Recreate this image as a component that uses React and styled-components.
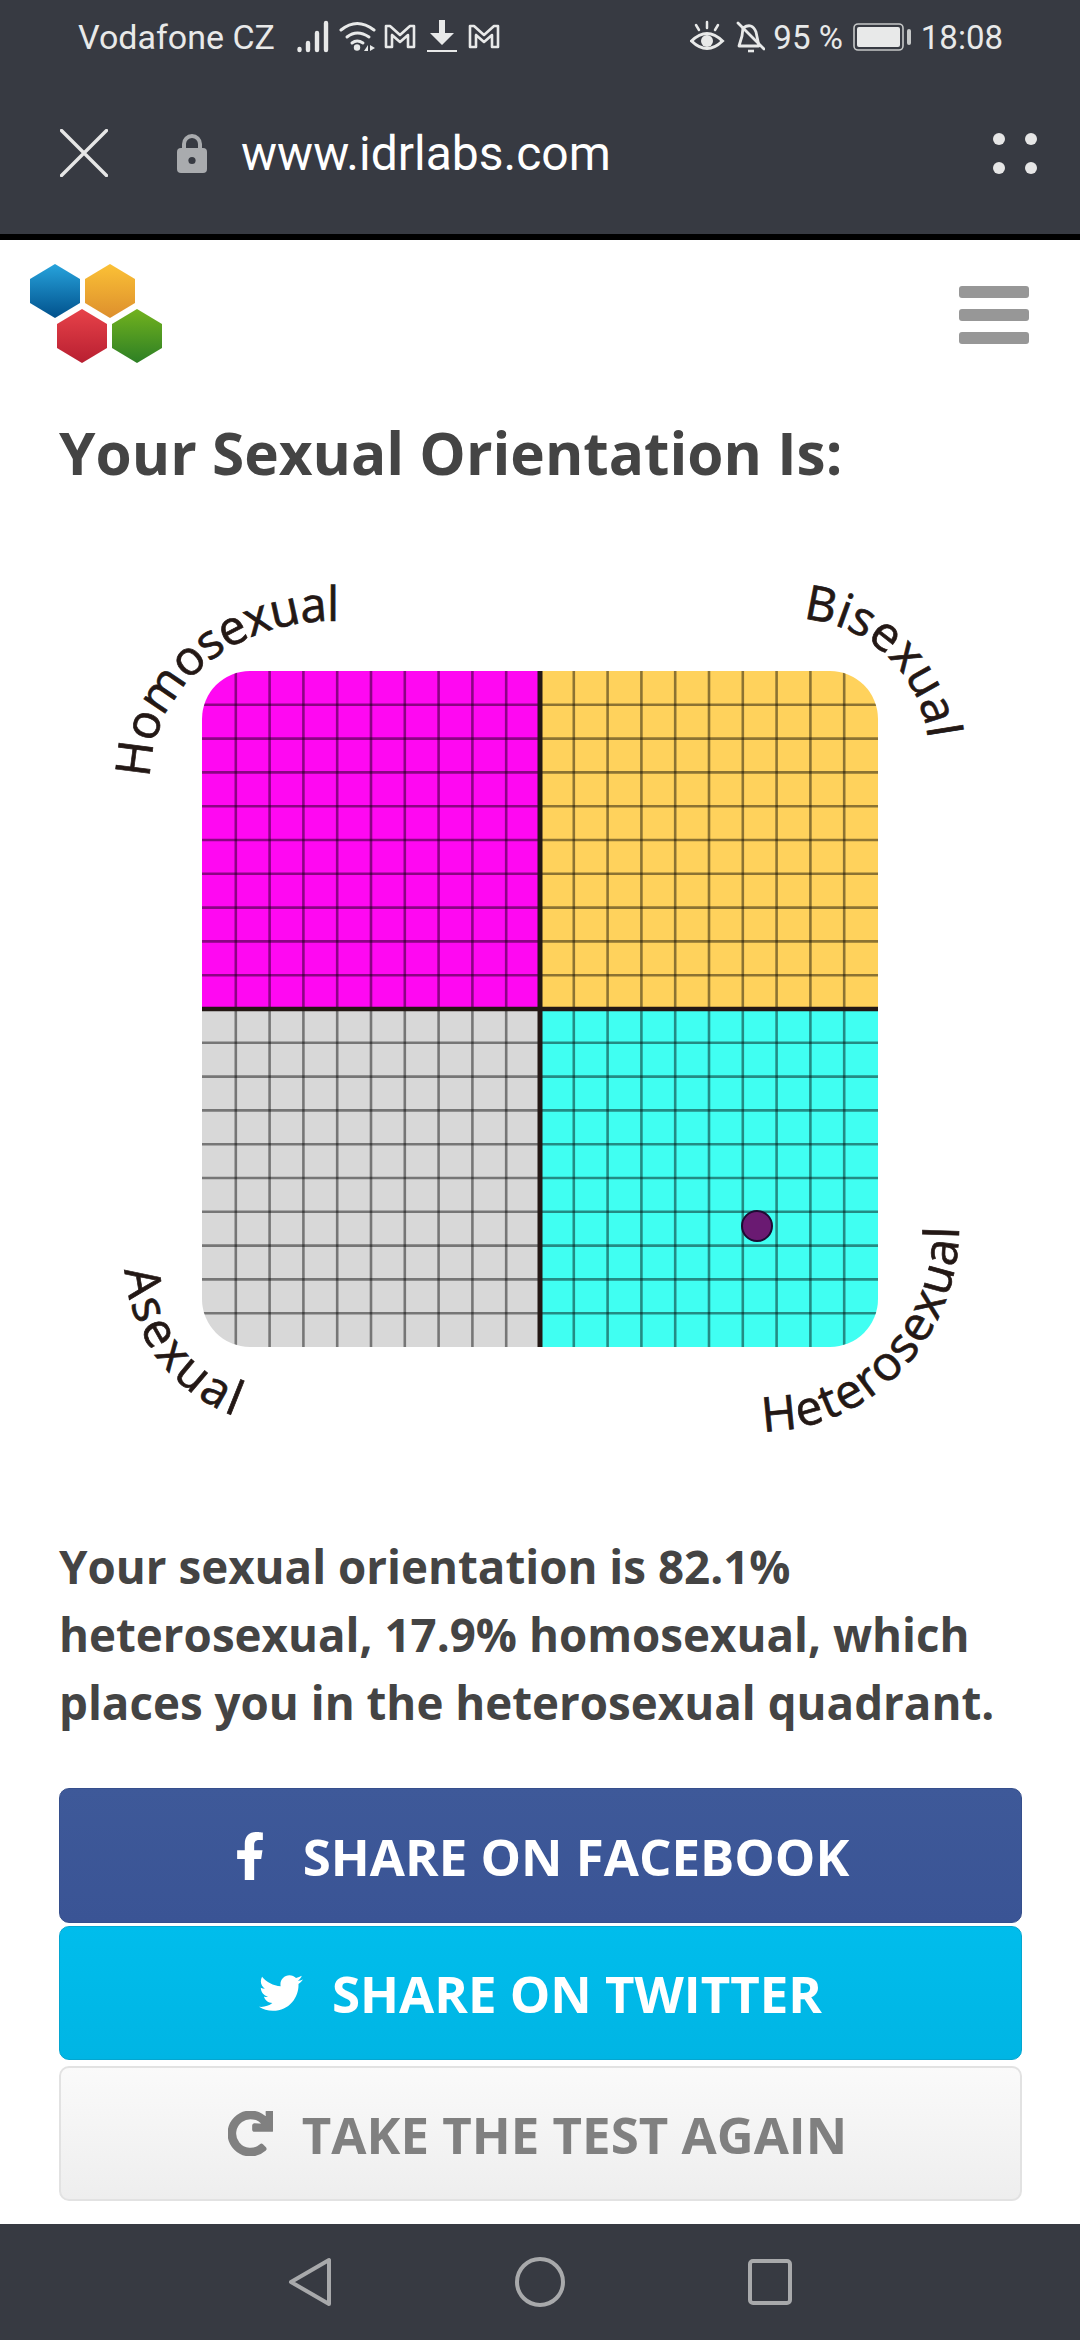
import React from 'react'
import styled, { createGlobalStyle } from 'styled-components'
import { FaFacebookF, FaTwitter, FaRedo } from 'react-icons/fa'

const Global = createGlobalStyle`
  html, body { margin: 0; padding: 0; background: #fff; }
  * { box-sizing: border-box; }
`

const Page = styled.div`
  width: 1080px;
  height: 2340px;
  display: flex;
  flex-direction: column;
  overflow: hidden;
  font-family: "Open Sans", sans-serif;
  background: #fff;
`
const TopChrome = styled.header`
  height: 240px;
  flex: none;
  background: #373a42;
  border-bottom: 6px solid #000;
  display: flex;
  flex-direction: column;
`
const StatusBar = styled.div`
  height: 72px;
  display: flex;
  align-items: center;
  justify-content: space-between;
  padding: 2px 77px 0 78px;
  color: #e8e9e9;
  font-family: Roboto, sans-serif;
`
const StatusGroup = styled.div`
  display: flex;
  align-items: center;
  font-size: ${p => p.$size}px;
`
const Percent = styled.span`
  margin-left: 8px;
`
const Toolbar = styled.div`
  flex: 1;
  display: flex;
  align-items: center;
  padding-left: 60px;
`
const LockIcon = styled.svg`
  margin-left: 69px;
`
const Url = styled.span`
  font-family: Roboto, sans-serif;
  font-size: 48px;
  color: #fff;
  margin-left: 34px;
`
const Dots = styled.div`
  margin-left: auto;
  margin-right: 43px;
  display: grid;
  grid-template-columns: 12px 12px;
  column-gap: 20px;
  row-gap: 17px;
`
const Dot = styled.i`
  width: 12px;
  height: 12px;
  border-radius: 50%;
  background: #e6e6e6;
`
const Main = styled.main`
  flex: 1;
  display: flex;
  flex-direction: column;
  padding: 24px 58px 0 59px;
`
const LogoRow = styled.div`
  display: flex;
  justify-content: space-between;
  align-items: flex-start;
  margin-left: -29px;
`
const Burger = styled.div`
  width: 70px;
  margin: 22px -7px 0 0;
  display: flex;
  flex-direction: column;
  gap: 11px;
`
const BurgerBar = styled.span`
  height: 12px;
  border-radius: 3px;
  background: #979797;
`
const Heading = styled.h1`
  margin: 47px 0 0;
  font-size: 58.5px;
  line-height: 82px;
  font-weight: 700;
  color: #444;
`
const ChartSvg = styled.svg`
  display: block;
  width: 1080px;
  height: 900px;
  margin: 67px 0 0 -59px;
  flex: none;
`
const Summary = styled.p`
  margin: 72px 0 0;
  font-size: 45.7px;
  line-height: 68px;
  font-weight: 700;
  color: #444;
`
const Buttons = styled.div`
  margin-top: 52px;
  display: flex;
  flex-direction: column;
`
const ShareButton = styled.div`
  height: ${p => p.$h}px;
  margin-top: ${p => p.$top}px;
  padding-right: ${p => p.$shift}px;
  border-radius: 10px;
  border: ${p => p.$border};
  background: ${p => p.$bg};
  color: ${p => p.$color};
  display: flex;
  align-items: center;
  justify-content: center;
  gap: 29px;
  font-size: 51px;
  font-weight: 700;
`
const RedoIcon = styled(FaRedo)`
  stroke: currentColor;
  stroke-width: 26;
`
const NavBar = styled.nav`
  height: 116px;
  flex: none;
  background: #373a42;
  display: flex;
  align-items: center;
  justify-content: center;
  gap: 183px;
`

const cells = Array.from({ length: 19 }, (_, i) => i + 1)
const chartX = 202
const chartY = 671
const chartSize = 676
const cell = chartSize / 20

function Chart() {
  return (
    <ChartSvg viewBox="0 560 1080 900">
      <defs>
        <clipPath id="chart-clip">
          <rect x={chartX} y={chartY} width={chartSize} height={chartSize} rx="48" />
        </clipPath>
        <path id="arc-homo" d="M150 778 A182 157 0 0 1 332 621 L350 621" />
        <path id="arc-bi" d="M803 619 A136 136 0 0 1 928 738 L928 760" />
        <path id="arc-a" d="M125 1270 A168 168 0 0 0 237 1417 L260 1424" />
        <path id="arc-hetero" d="M763 1431 A196 205 0 0 0 959 1226 L959 1200" />
      </defs>
      <g clipPath="url(#chart-clip)">
        <rect x={chartX} y={chartY} width={chartSize / 2} height={chartSize / 2} fill="#ff08f2" />
        <rect x={540} y={chartY} width={chartSize / 2} height={chartSize / 2} fill="#ffd25c" />
        <rect x={chartX} y={1009} width={chartSize / 2} height={chartSize / 2} fill="#d8d8d8" />
        <rect x={540} y={1009} width={chartSize / 2} height={chartSize / 2} fill="#40fff2" />
        {cells.map(i => (
          <g key={i} stroke="#000" strokeOpacity="0.45" strokeWidth="2.6">
            <line x1={chartX + i * cell} x2={chartX + i * cell} y1={chartY} y2={chartY + chartSize} />
            <line y1={chartY + i * cell} y2={chartY + i * cell} x1={chartX} x2={chartX + chartSize} />
          </g>
        ))}
        <line x1="540" x2="540" y1={chartY} y2={chartY + chartSize} stroke="#231815" strokeWidth="5" />
        <line y1="1009" y2="1009" x1={chartX} x2={chartX + chartSize} stroke="#231815" strokeWidth="4.5" />
      </g>
      <circle cx="757" cy="1226" r="15" fill="#6a1a72" stroke="#1d0b33" strokeWidth="2" />
      <g fontFamily="'Open Sans', sans-serif" fontSize="48" fill="#231815" stroke="#231815" strokeWidth="0.7">
        <text letterSpacing="-0.8"><textPath href="#arc-homo">Homosexual</textPath></text>
        <text letterSpacing="0.2"><textPath href="#arc-bi">Bisexual</textPath></text>
        <text letterSpacing="3.2"><textPath href="#arc-a">Asexual</textPath></text>
        <text letterSpacing="1.4"><textPath href="#arc-hetero">Heterosexual</textPath></text>
      </g>
    </ChartSvg>
  )
}

const hexShape = 'M25 0 L50 15 V39 L25 54 L0 39 V15 Z'

function Logo() {
  return (
    <svg width="135" height="100" viewBox="0 0 135 100">
      <defs>
        <linearGradient id="hex-blue" x1="0" y1="0" x2="0" y2="1"><stop offset="0" stopColor="#27a3dc" /><stop offset="1" stopColor="#01518c" /></linearGradient>
        <linearGradient id="hex-orange" x1="0" y1="0" x2="0" y2="1"><stop offset="0" stopColor="#fbc136" /><stop offset="1" stopColor="#dd8f2d" /></linearGradient>
        <linearGradient id="hex-red" x1="0" y1="0" x2="0" y2="1"><stop offset="0" stopColor="#e74249" /><stop offset="1" stopColor="#b81f31" /></linearGradient>
        <linearGradient id="hex-green" x1="0" y1="0" x2="0" y2="1"><stop offset="0" stopColor="#72b21e" /><stop offset="1" stopColor="#2d7f25" /></linearGradient>
      </defs>
      <path d={hexShape} fill="url(#hex-blue)" />
      <path d={hexShape} fill="url(#hex-orange)" transform="translate(55 0)" />
      <path d={hexShape} fill="url(#hex-red)" transform="translate(27 45)" />
      <path d={hexShape} fill="url(#hex-green)" transform="translate(82 45)" />
    </svg>
  )
}

const gmailShape = 'M2 5 H6 L16 14 L26 5 H30 V26 H24 V14 L16 21 L8 14 V26 H2 Z'

function StatusIconsLeft() {
  return (
    <svg width="204" height="34" viewBox="0 0 204 34" style={{ marginLeft: 22 }} fill="none" stroke="#e8e9e9">
      <g strokeWidth="4.4" strokeLinecap="round">
        <path d="M2.5 29 V30" /><path d="M11 23 V30" /><path d="M20 13 V30" /><path d="M29 3 V30" />
      </g>
      <g strokeWidth="3" strokeLinecap="round">
        <path d="M44 10 Q60 -3 77 10" /><path d="M50 17 Q60 9 72 17" /><path d="M55 23 Q60 19 66 23" />
      </g>
      <circle cx="60" cy="27.5" r="3.2" fill="#e8e9e9" stroke="none" />
      <path d="M67 31 L71 25 V31 Z M73 25 L78 28 L73 31 Z" fill="#e8e9e9" stroke="none" />
      <path d={gmailShape} strokeWidth="2.6" strokeLinejoin="round" transform="translate(87 1)" />
      <path d="M142 0 H148 V13 H157 L145 25 L133 13 H142 Z" fill="#e8e9e9" stroke="none" />
      <path d="M130 31 H160" strokeWidth="2" />
      <path d={gmailShape} strokeWidth="2.6" strokeLinejoin="round" transform="translate(171 1)" />
    </svg>
  )
}

function StatusIconsRight() {
  return (
    <svg width="75" height="34" viewBox="0 0 75 34" fill="none" stroke="#e8e9e9">
      <path d="M1.5 21 Q17 6 32.5 21 Q17 36 1.5 21 Z" strokeWidth="3" />
      <circle cx="17" cy="21" r="6" fill="#e8e9e9" stroke="none" />
      <path d="M17 2 V8 M6 5 L9 10 M28 5 L25 10" strokeWidth="2.5" strokeLinecap="round" />
      <path d="M53 8 Q62 2 66 12 L69 26 H49 L52 16 Z" strokeWidth="2.8" strokeLinejoin="round" />
      <path d="M48 3 L74 29" strokeWidth="2.8" strokeLinecap="round" />
      <path d="M58 31 H64" strokeWidth="2.6" />
    </svg>
  )
}

function Battery() {
  return (
    <svg width="58" height="30" viewBox="0 0 58 30" style={{ margin: '0 10px' }}>
      <rect x="1" y="2" width="49" height="26" rx="4" fill="none" stroke="#c6c8c8" strokeWidth="1.6" />
      <rect x="4" y="5" width="43" height="20" rx="2" fill="#e8e9e9" />
      <rect x="54" y="7" width="4" height="16" rx="2" fill="#c6c8c8" />
    </svg>
  )
}

export default function App() {
  return (
    <Page>
      <Global />
      <TopChrome>
        <StatusBar>
          <StatusGroup $size={34}>
            Vodafone CZ
            <StatusIconsLeft />
          </StatusGroup>
          <StatusGroup $size={33}>
            <StatusIconsRight />
            <Percent>95 %</Percent>
            <Battery />
            18:08
          </StatusGroup>
        </StatusBar>
        <Toolbar>
          <svg width="48" height="48" viewBox="0 0 48 48" stroke="#e6e6e6" strokeWidth="3.4" strokeLinecap="round">
            <path d="M1.5 1.5 L46.5 46.5 M46.5 1.5 L1.5 46.5" />
          </svg>
          <LockIcon width="30" height="40" viewBox="0 0 30 40">
            <path d="M7 17 V11 A8 8 0 0 1 23 11 V17" fill="none" stroke="#a9abae" strokeWidth="4" />
            <rect y="15" width="30" height="25" rx="4" fill="#a9abae" />
            <circle cx="15" cy="27.5" r="3.6" fill="#373a42" />
          </LockIcon>
          <Url>www.idrlabs.com</Url>
          <Dots><Dot /><Dot /><Dot /><Dot /></Dots>
        </Toolbar>
      </TopChrome>
      <Main>
        <LogoRow>
          <Logo />
          <Burger><BurgerBar /><BurgerBar /><BurgerBar /></Burger>
        </LogoRow>
        <Heading>Your Sexual Orientation Is:</Heading>
        <Chart />
        <Summary>
          Your sexual orientation is 82.1%<br />
          heterosexual, 17.9% homosexual, which<br />
          places you in the heterosexual quadrant.
        </Summary>
        <Buttons>
          <ShareButton $h={135} $top={0} $shift={6} $bg="linear-gradient(#3e5999, #3a5495)" $color="#fff" $border="1px solid #364f8c">
            <FaFacebookF size={48} />SHARE ON FACEBOOK
          </ShareButton>
          <ShareButton $h={134} $top={3} $shift={0} $bg="linear-gradient(#00bdec, #00b5e4)" $color="#fff" $border="1px solid #04a6d0">
            <FaTwitter size={44} />SHARE ON TWITTER
          </ShareButton>
          <ShareButton $h={135} $top={6} $shift={6} $bg="linear-gradient(#fafafa, #eeeeee)" $color="#808080" $border="2px solid #e2e2e2">
            <RedoIcon size={45} />TAKE THE TEST AGAIN
          </ShareButton>
        </Buttons>
      </Main>
      <NavBar>
        <svg width="44" height="50" viewBox="0 0 44 50" fill="none" stroke="#a8a9ab" strokeWidth="4" strokeLinejoin="round">
          <path d="M41 3 V47 L3 25 Z" />
        </svg>
        <svg width="50" height="50" viewBox="0 0 50 50" fill="none" stroke="#a8a9ab" strokeWidth="4">
          <circle cx="25" cy="25" r="23" />
        </svg>
        <svg width="44" height="46" viewBox="0 0 44 46" fill="none" stroke="#a8a9ab" strokeWidth="4">
          <rect x="2" y="2" width="40" height="42" rx="3" />
        </svg>
      </NavBar>
    </Page>
  )
}
